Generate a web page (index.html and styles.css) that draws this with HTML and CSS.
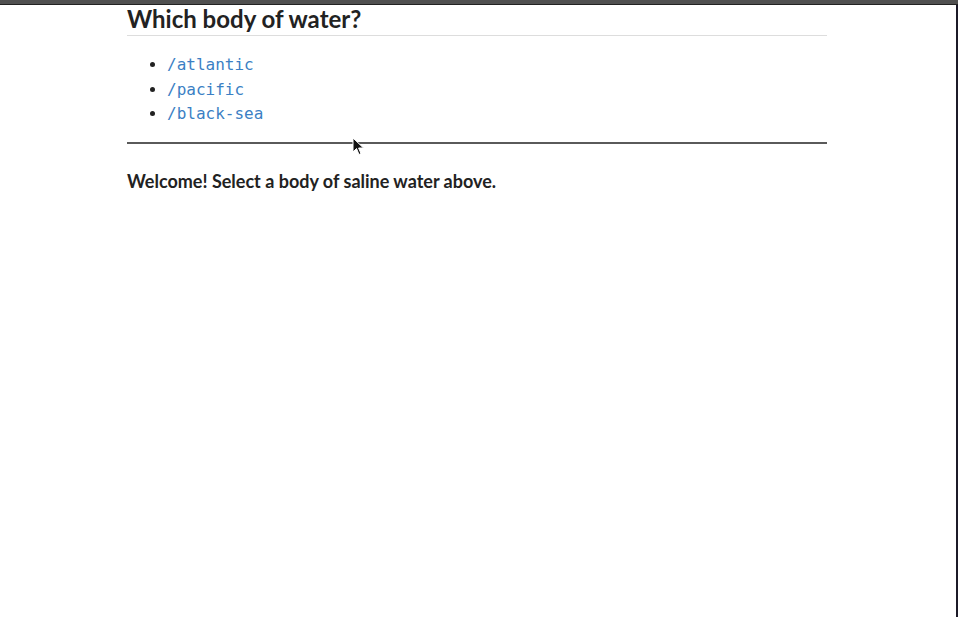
FILE: index.html
```html
<!DOCTYPE html>
<html>
<head>
<meta charset="utf-8">
<link rel="stylesheet" href="styles.css">
</head>
<body>
<div class="topbar"></div>
<div class="frame">
  <main class="content">
    <h2 class="title">Which body of water?</h2>
    <ul class="links">
      <li><a href="#">/atlantic</a></li>
      <li><a href="#">/pacific</a></li>
      <li><a href="#">/black-sea</a></li>
    </ul>
    <hr class="rule">
    <p class="welcome">Welcome! Select a body of saline water above.</p>
  </main>
  <svg class="cursor" width="14" height="20" viewBox="0 0 14 20">
    <path d="M1 1 L1 15 L4.5 11.5 L7 17.5 L9 16.6 L6.6 11 L11.5 11 Z" fill="#111" stroke="#fff" stroke-width="1"/>
  </svg>
</div>
</body>
</html>
```
FILE: styles.css
```css
html, body {
  margin: 0;
  padding: 0;
  background: #fff;
}
body {
  width: 958px;
  height: 617px;
  overflow: hidden;
  font-family: Lato, "Liberation Sans", sans-serif;
  color: #222;
  display: flex;
  flex-direction: column;
}
.topbar {
  height: 4px;
  background: #505050;
  border-bottom: 1px solid #222;
  flex: none;
}
.frame {
  position: relative;
  flex: 1;
  border-right: 2px solid #1c1a28;
  padding-left: 127px;
}
.content {
  width: 700px;
}
.title {
  margin: 0;
  font-size: 24px;
  font-weight: 700;
  line-height: 28px;
  padding-bottom: 2px;
  border-bottom: 1px solid #ddd;
}
.links {
  margin: 17px 0 0 0;
  padding-left: 40px;
  font-family: "DejaVu Sans Mono", monospace;
  font-size: 16px;
  line-height: 24.5px;
}
.links a {
  color: #3b7fc4;
  text-decoration: none;
}
.rule {
  margin: 15px 0 0 0;
  border: 0;
  border-top: 2px solid #5a5a5a;
  height: 0;
}
.welcome {
  margin: 25px 0 0 0;
  font-size: 18px;
  font-weight: 700;
  line-height: 24px;
}
.cursor {
  position: absolute;
  left: 352px;
  top: 132px;
}
```
